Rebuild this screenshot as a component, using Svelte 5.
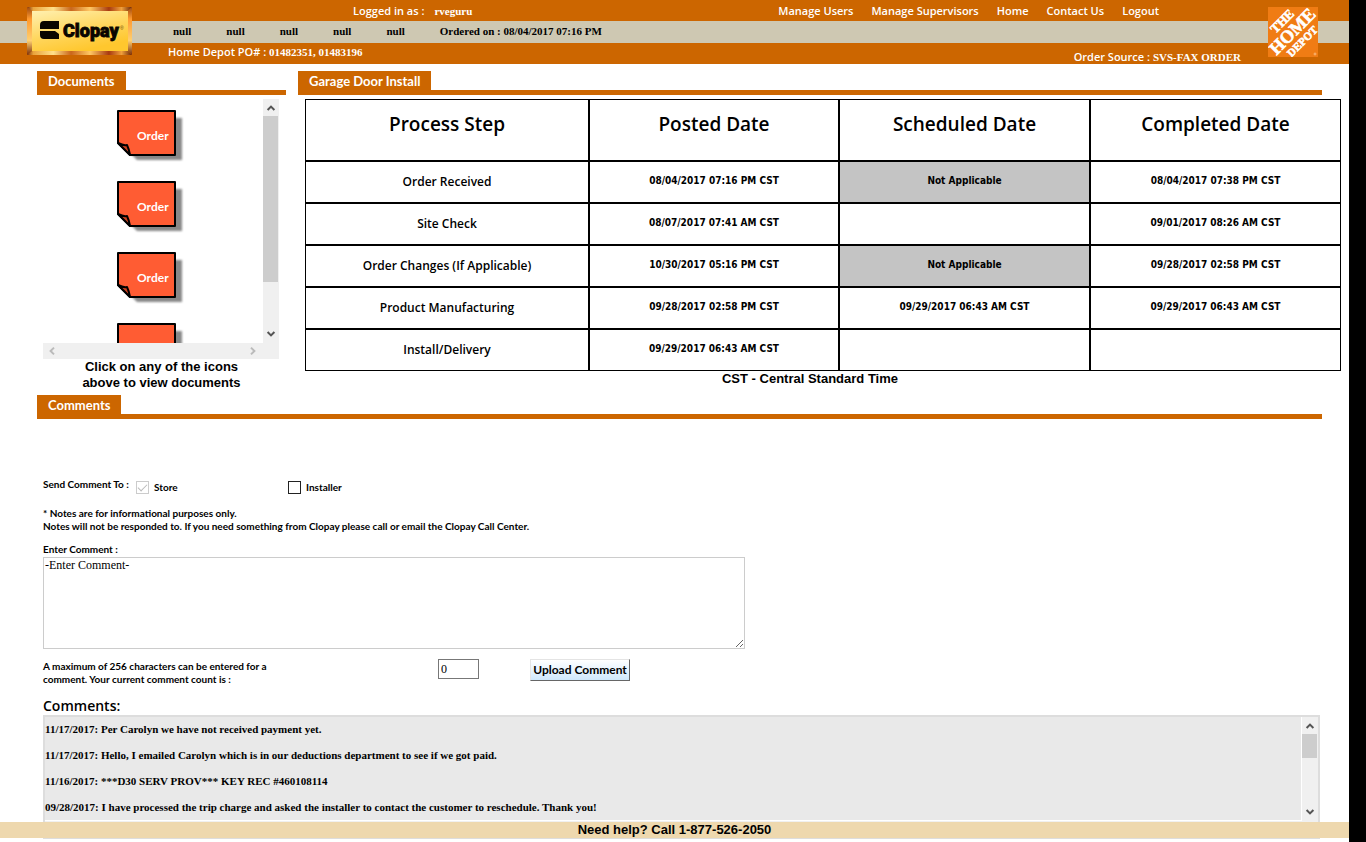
<script>
  const nav = ['Manage Users', 'Manage Supervisors', 'Home', 'Contact Us', 'Logout'];
  const blanks = ['null', 'null', 'null', 'null', 'null'];
  const docs = ['Order', 'Order', 'Order', 'Order'];
  const columns = ['Process Step', 'Posted Date', 'Scheduled Date', 'Completed Date'];
  const NA = 'Not Applicable';
  const steps = [
    ['Order Received', '08/04/2017 07:16 PM CST', NA, '08/04/2017 07:38 PM CST'],
    ['Site Check', '08/07/2017 07:41 AM CST', '', '09/01/2017 08:26 AM CST'],
    ['Order Changes (If Applicable)', '10/30/2017 05:16 PM CST', NA, '09/28/2017 02:58 PM CST'],
    ['Product Manufacturing', '09/28/2017 02:58 PM CST', '09/29/2017 06:43 AM CST', '09/29/2017 06:43 AM CST'],
    ['Install/Delivery', '09/29/2017 06:43 AM CST', '', '']
  ];
  const comments = [
    '11/17/2017: Per Carolyn we have not received payment yet.',
    '11/17/2017: Hello, I emailed Carolyn which is in our deductions department to see if we got paid.',
    '11/16/2017: ***D30 SERV PROV*** KEY REC #460108114',
    '09/28/2017: I have processed the trip charge and asked the installer to contact the customer to reschedule. Thank you!'
  ];
</script>

{#snippet arrow(dir)}
  <svg class="arrow {dir}" width="16" height="16" viewBox="0 0 16 16" aria-hidden="true">
    <path d="M4.6 11 L8 7.6 L11.4 11" fill="none" stroke="currentColor" stroke-width="2" />
  </svg>
{/snippet}

<div class="shell">
  <div class="page">
    <header>
      <div class="band top">
        <span class="login">Logged in as :</span>
        <span class="serif">rveguru</span>
        <nav>
          {#each nav as item}<a href="#top">{item}</a>{/each}
        </nav>
      </div>
      <div class="band middle serif">
        {#each blanks as b}<span>{b}</span>{/each}
        <span>Ordered on : 08/04/2017 07:16 PM</span>
      </div>
      <div class="band bottom">
        <span>Home Depot PO# : <span class="serif">01482351, 01483196</span></span>
        <span class="source">Order Source : <span class="serif">SVS-FAX ORDER</span></span>
      </div>

      <svg class="clopay" width="105" height="48" viewBox="0 0 105 48" role="img" aria-label="Clopay">
        <defs>
          <linearGradient id="gold" x1="0" y1="0" x2="0.5" y2="1">
            <stop offset="0" stop-color="#fff0b0" />
            <stop offset="0.6" stop-color="#ffd55a" />
            <stop offset="1" stop-color="#ffc72e" />
          </linearGradient>
          <linearGradient id="rimA">
            <stop offset="0" stop-color="#7a2c08" />
            <stop offset="0.06" stop-color="#e9a33c" />
            <stop offset="0.25" stop-color="#ffe08a" />
            <stop offset="0.42" stop-color="#c9661c" />
            <stop offset="0.6" stop-color="#ffc864" />
            <stop offset="0.78" stop-color="#a83a10" />
            <stop offset="0.9" stop-color="#f0a03c" />
            <stop offset="1" stop-color="#6b2406" />
          </linearGradient>
          <linearGradient id="rimB" x1="0" y1="0" x2="0" y2="1">
            <stop offset="0" stop-color="#a04a10" />
            <stop offset="0.25" stop-color="#ff9a30" />
            <stop offset="0.7" stop-color="#ffd070" />
            <stop offset="1" stop-color="#7a2c08" />
          </linearGradient>
        </defs>
        <path d="M0 0H105L101 4H5Z M0 48H105L101 44H5Z" fill="url(#rimA)" />
        <path d="M0 0L5 4V44L0 48Z M105 0L101 4V44L105 48Z" fill="url(#rimB)" />
        <rect x="5" y="4" width="96" height="40" fill="url(#gold)" />
        <path d="M17 14H32V22H13V18Q13 14 17 14Z M13 24H28L32 27V32H17Q13 32 13 28Z" fill="#0a0500" />
        <text x="36" y="30" class="clopay-word">Clopay</text>
        <text x="93" y="23" class="mark">®</text>
      </svg>

      <svg class="depot" width="50" height="50" viewBox="0 0 50 50" role="img" aria-label="The Home Depot">
        <rect width="50" height="50" fill="#f07c14" />
        <g transform="rotate(-45 25 25)" class="stencil">
          <text x="25" y="14" font-size="13">THE</text>
          <text x="25" y="30" font-size="18">HOME</text>
          <text x="25" y="42" font-size="11">DEPOT</text>
        </g>
        <circle cx="47" cy="47" r="1" fill="none" stroke="#ffd9b0" stroke-width="0.6" />
      </svg>
    </header>

    <main>
      <div class="columns">
        <section class="documents">
          <h2><span>Documents</span></h2>
          <div class="viewer">
            <div class="list">
              {#each docs as doc}
                <a class="doc" href="#document">
                  <svg width="68" height="54" viewBox="0 0 68 54" aria-hidden="true">
                    <path class="shade" d="M8 8H65V50H20L8 38Z" />
                    <path d="M1 1H58V45H13L1 33Z" fill="#ff5c33" stroke="#000" stroke-width="2" stroke-linejoin="round" />
                    <path d="M1 33Q7 36 10 35Q12 39 13 45Z" fill="#c8401f" stroke="#000" stroke-width="2" stroke-linejoin="round" />
                  </svg>
                  <span>{doc}</span>
                </a>
              {/each}
            </div>
            <div class="vbar">
              {@render arrow('up')}
              <div class="thumb"></div>
              {@render arrow('down')}
            </div>
            <div class="hbar">
              {@render arrow('left')}
              {@render arrow('right')}
            </div>
          </div>
          <p class="hint">Click on any of the icons<br />above to view documents</p>
        </section>

        <section class="install">
          <h2><span>Garage Door Install</span></h2>
          <table>
            <thead>
              <tr>{#each columns as c}<th scope="col">{c}</th>{/each}</tr>
            </thead>
            <tbody>
              {#each steps as row}
                <tr>
                  {#each row as cell, i}
                    {#if i === 0}<th scope="row">{cell}</th>
                    {:else}<td class:na={cell === NA}>{cell}</td>{/if}
                  {/each}
                </tr>
              {/each}
            </tbody>
          </table>
          <p class="zone">CST - Central Standard Time</p>
        </section>
      </div>

      <section class="comments">
        <h2><span>Comments</span></h2>
        <div class="form">
          <div class="send">
            <span class="to">Send Comment To :</span>
            <label class="store"><input type="checkbox" checked disabled />Store</label>
            <label><input type="checkbox" />Installer</label>
          </div>
          <p class="notes">
            * Notes are for informational purposes only.<br />
            Notes will not be responded to. If you need something from Clopay please call or email the Clopay Call Center.
          </p>
          <label class="enter" for="comment">Enter Comment :</label>
          <textarea id="comment">-Enter Comment-</textarea>
          <div class="count">
            <label for="total">A maximum of 256 characters can be entered for a comment. Your current comment count is :</label>
            <input id="total" type="text" value="0" readonly />
            <button type="button">Upload Comment</button>
          </div>
          <h3>Comments:</h3>
          <div class="log">
            <div class="entries">
              {#each comments as c}<p>{c}</p>{/each}
            </div>
            <div class="vbar">
              {@render arrow('up')}
              <div class="thumb"></div>
              {@render arrow('down')}
            </div>
          </div>
        </div>
      </section>
    </main>
    <footer>Need help? Call 1-877-526-2050</footer>
  </div>
  <div class="rail"></div>
</div>

<style>
  :global(body) {
    background: #fff;
  }
  .shell {
    --sans: 'Open Sans', 'Noto Sans', sans-serif;
    --serif: 'Liberation Serif', serif;
    --arial: 'Liberation Sans', sans-serif;
    --orange: #cc6600;
    display: flex;
    min-height: 100vh;
    font: 600 11px/16px var(--sans);
    color: #000;
  }
  .shell *,
  .shell *::after {
    box-sizing: border-box;
  }
  .page {
    flex: 1;
    min-width: 0;
  }
  .rail {
    width: 17px;
    background: #000;
  }
  .serif {
    font-family: var(--serif);
    font-weight: bold;
  }
  p,
  h2,
  h3 {
    margin: 0;
  }
  a {
    color: inherit;
    text-decoration: none;
  }

  header {
    position: relative;
    color: #fff;
  }
  .band {
    display: flex;
    background: var(--orange);
    height: 21px;
    align-items: center;
  }
  .top {
    padding: 0 190px 0 353px;
    gap: 10px;
  }
  nav {
    display: flex;
    gap: 18px;
    margin-left: auto;
  }
  .middle {
    height: 22px;
    padding: 2px 173px 0;
    gap: 35px;
    background: #cec8b2;
    color: #000;
    align-items: flex-start;
  }
  .bottom {
    padding: 1px 108px 0 168px;
    justify-content: space-between;
    align-items: flex-start;
  }
  .source {
    padding-top: 5px;
  }
  .clopay {
    position: absolute;
    left: 27px;
    top: 7px;
  }
  .clopay-word {
    font: 900 18px Roboto, sans-serif;
    fill: #0a0500;
    stroke: #0a0500;
    stroke-width: 0.8;
  }
  .mark {
    font: 5px var(--arial);
    fill: #6b4a00;
  }
  .depot {
    position: absolute;
    right: 31px;
    top: 7px;
  }
  .stencil {
    font-family: var(--serif);
    font-weight: bold;
    fill: #fff;
    stroke: #fff;
    stroke-width: 0.6;
    text-anchor: middle;
  }

  main {
    padding: 7px 27px 0 37px;
  }
  .columns {
    display: flex;
    gap: 12px;
    height: 324px;
  }
  .documents {
    width: 249px;
  }
  .install {
    flex: 1;
    min-width: 0;
  }
  h2 {
    display: flex;
    border-bottom: 5px solid var(--orange);
    font: bold 13px/19px Lato, sans-serif;
    color: #fff;
  }
  h2 span {
    padding: 1px 11px 0;
    margin-bottom: -1px;
    background: var(--orange);
  }

  .viewer {
    display: grid;
    grid-template: 244px 16px / 1fr 16px;
    margin: 4px 7px 0 6px;
  }
  .list {
    display: flex;
    flex-direction: column;
    align-items: center;
    gap: 17px;
    padding-top: 11px;
    overflow: hidden;
  }
  .doc {
    display: grid;
    flex: none;
    height: 54px;
    padding-right: 4px;
    color: #fff;
    font: bold 12px/16px Lato, sans-serif;
  }
  .doc svg,
  .doc span {
    grid-area: 1 / 1;
  }
  .doc span {
    padding: 18px 0 0 20px;
    z-index: 1;
  }
  .doc svg {
    overflow: visible;
  }
  .shade {
    fill: #888;
    filter: blur(1px);
  }
  .vbar {
    display: flex;
    flex-direction: column;
    width: 16px;
    background: #f0f0f0;
    color: #555;
  }
  .thumb {
    width: 15px;
    height: 166px;
    margin-top: 1px;
    margin-bottom: auto;
    background: #cdcdcd;
  }
  .hbar {
    grid-column: 1 / 3;
    display: flex;
    justify-content: space-between;
    padding-right: 17px;
    background: #f0f0f0;
    color: #bbb;
  }
  .arrow {
    flex: none;
  }
  .down {
    transform: rotate(180deg);
  }
  .left {
    transform: rotate(-90deg);
  }
  .right {
    transform: rotate(90deg);
  }
  .hint,
  .zone {
    font: bold 13px/16px var(--arial);
    text-align: center;
  }

  table {
    width: calc(100% + 12px);
    margin: 4px 0 0 7px;
    border: 0 solid #000;
    border-spacing: 0;
    table-layout: fixed;
  }
  th,
  td {
    height: 42px;
    padding: 0;
    border: 1px solid #000;
    text-align: center;
  }
  thead th {
    height: 62px;
    padding-top: 11px;
    vertical-align: top;
    font: 600 19px/26px var(--sans);
  }
  thead th:first-child {
    width: 284px;
  }
  thead th:nth-child(2) {
    width: 250px;
  }
  tbody th {
    font: 600 12px/18px var(--sans);
  }
  td {
    padding-bottom: 3px;
    font: bold 10px/16px 'DejaVu Sans Condensed', 'DejaVu Sans', sans-serif;
  }
  .na {
    background: #c4c4c4;
  }

  .form {
    padding: 58px 2px 0 6px;
    font: bold 10px/13px Lato, sans-serif;
  }
  .send {
    display: flex;
    height: 30px;
  }
  .to {
    width: 93px;
    padding-top: 1px;
    white-space: nowrap;
  }
  .send label {
    display: flex;
    align-items: center;
    gap: 5px;
    height: 21px;
  }
  .store {
    width: 152px;
  }
  input[type='checkbox'] {
    appearance: none;
    display: grid;
    place-items: center;
    width: 13px;
    height: 13px;
    margin: 0;
    border: 1px solid #222;
    background: #fff;
  }
  input[type='checkbox']:disabled {
    border-color: #ccc;
  }
  input[type='checkbox']:checked::after {
    content: '';
    width: 9px;
    height: 5px;
    margin-bottom: 3px;
    border: solid #bbb;
    border-width: 0 0 1px 1px;
    transform: rotate(-45deg);
  }
  .enter {
    display: block;
    padding-top: 10px;
  }
  textarea {
    display: block;
    width: 702px;
    height: 92px;
    margin-top: 1px;
    padding: 0 1px;
    border: 1px solid #ccc;
    font: 12px/14px var(--serif);
    color: #000;
  }
  .count {
    display: flex;
    align-items: flex-start;
    height: 48px;
    padding-top: 10px;
  }
  .count label {
    width: 250px;
    margin-right: 145px;
    padding-top: 1px;
  }
  .count input {
    width: 41px;
    height: 20px;
    margin: 0 51px 0 0;
    padding: 0 2px;
    border: 1px solid #777;
    font: 12px/16px var(--serif);
  }
  button {
    width: 100px;
    height: 22px;
    padding: 0;
    border: 1px solid;
    border-color: #e4e4e4 #666 #666 #e4e4e4;
    background: linear-gradient(#fff, #cfe8fc);
    font: bold 12px/16px Lato, sans-serif;
    white-space: nowrap;
  }
  h3 {
    font: 600 14px/18px var(--sans);
  }
  .log {
    display: flex;
    height: 124px;
    border: 2px solid #ddd;
    background: #f0f0f0;
  }
  .entries {
    flex: 1;
    height: 104px;
    border: solid #fff;
    border-width: 0 1px 1px 0;
    background: #e9e9e9;
    overflow: hidden;
  }
  .entries p {
    padding: 4px 0 6px;
    font: bold 11px/16px var(--serif);
  }
  .log .vbar {
    height: 104px;
  }
  .log .thumb {
    height: 24px;
  }
  footer {
    position: fixed;
    left: 0;
    right: 17px;
    bottom: 4px;
    background: #eed8ae;
    font: bold 13px/16px var(--arial);
    text-align: center;
  }
</style>
